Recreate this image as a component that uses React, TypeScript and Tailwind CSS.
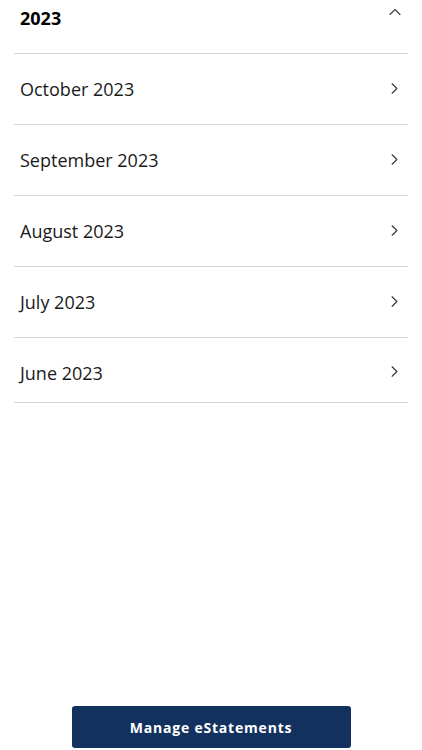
import { ChevronRight, ChevronUp } from "lucide-react";

const months = ["October 2023", "September 2023", "August 2023", "July 2023", "June 2023"];

export default function App() {
  return (
    <div className="flex h-[750px] flex-col bg-white text-[#1a1a1a]" style={{ fontFamily: '"Open Sans", sans-serif' }}>
      <div className="mx-[14px]">
        <header className="flex h-[54px] items-start justify-between border-b border-[#d6d6d6] pt-[5px] pl-[6px] pr-[3px]">
          <h2 className="text-[18px] font-bold leading-[26px] text-black">2023</h2>
          <ChevronUp aria-hidden="true" className="mt-[-3px] size-[20px] text-[#444]" strokeWidth={1.4} />
        </header>
        <ul>
          {months.map((month, index) => {
            const last = index === months.length - 1;
            return (
              <li
                key={month}
                className={`flex justify-between border-b border-[#d6d6d6] pl-[6px] pr-[4px] ${last ? "h-[65px] items-start pt-[22px]" : "h-[71px] items-center"}`}
              >
                <span className="text-[18px] leading-[26px]">{month}</span>
                <ChevronRight aria-hidden="true" className={`size-[19px] text-[#333] ${last ? "mt-[2px]" : "mt-[-1px]"}`} strokeWidth={1.4} />
              </li>
            );
          })}
        </ul>
      </div>
      <div className="mt-auto flex justify-center pb-[2px]">
        <button type="button" className="h-[42px] w-[279px] rounded-[3px] bg-[#13315f] text-[14px] font-bold tracking-[0.8px] text-white">
          Manage eStatements
        </button>
      </div>
    </div>
  );
}
